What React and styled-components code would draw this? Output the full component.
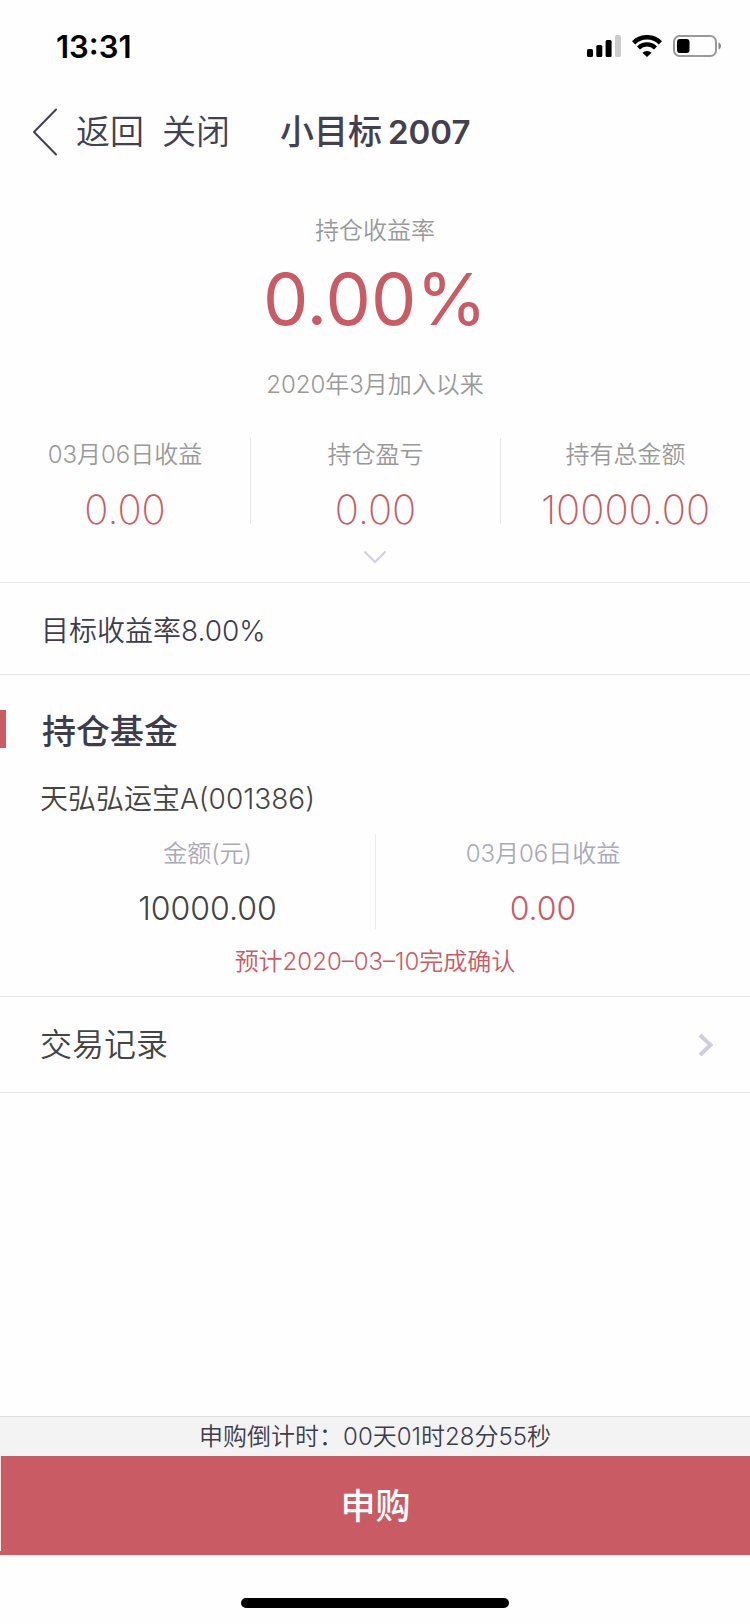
import React from "react"
import styled, { createGlobalStyle } from 'styled-components'

const GlobalStyle = createGlobalStyle`
  * {
    box-sizing: border-box;
  }

  body {
    margin: 0;
    background-color: #fefefe;
    color: #3e3c4c;
    font-family: Inter, "Noto Sans CJK SC", sans-serif;
    font-weight: 350;
  }

  button {
    padding: 0;
    border: none;
    background: none;
    color: inherit;
    font: inherit;
    cursor: pointer;
  }

  h1, h2, p, dl, dd {
    margin: 0;
  }

  svg {
    display: block;
  }
`

const Tela = styled.div`
  display: flex;
  flex-direction: column;
  min-height: 100vh;
`

const BarraDeStatus = styled.div`
  display: flex;
  align-items: center;
  justify-content: space-between;
  height: 92px;
  padding: 0 28px 0 56px;
  color: #000;
`

const Hora = styled.time`
  font-size: 31px;
  font-weight: 600;
`

const Indicadores = styled.div`
  display: flex;
  align-items: center;
  gap: 11px;
`

const Navegacao = styled.header`
  display: flex;
  align-items: center;
  height: 80px;
  padding: 0 32px;
  color: #43414f;
  font-size: 34px;
  line-height: 42px;
`

const BotaoNav = styled.button`
  display: flex;
  align-items: center;
  gap: 18px;
  margin-right: 18px;
`

const Titulo = styled.h1`
  display: flex;
  align-items: baseline;
  gap: 6px;
  margin-left: 32px;
  font-size: 34px;
  font-weight: 500;
  white-space: nowrap;
`

const Numero = styled.span`
  font-size: 33px;
  font-weight: 600;
`

const Resumo = styled.section`
  display: flex;
  flex-direction: column;
  align-items: center;
  padding: 41px 0 8px;
  border-bottom: 1px solid #e6e6e8;
`

const Legenda = styled.p`
  color: #999;
  font-size: 24px;
  line-height: 36px;
`

const Taxa = styled.p`
  margin: 10px 0 28px;
  color: #c95b64;
  font-size: 72px;
  font-weight: 400;
  line-height: 80px;
`

const Estatisticas = styled.dl`
  display: grid;
  grid-template-columns: repeat(3, 1fr);
  width: 100%;
  margin-top: 35px;
`

const Estatistica = styled.div`
  display: flex;
  flex-direction: column;
  align-items: center;
  gap: 24px;

  & + & {
    border-left: 1px solid #e6e6e8;
  }
`

const Rotulo = styled.dt`
  color: #999;
  font-size: 24px;
  line-height: 34px;
`

const Valor = styled.dd`
  color: #c95b64;
  font-size: 40px;
  font-weight: 250;
  line-height: 28px;
`

const BotaoExpandir = styled.button`
  display: grid;
  place-items: center;
  width: 80px;
  height: 34px;
  margin-top: 16px;
`

const Meta = styled.p`
  padding: 6px 41px 0;
  border-bottom: 1px solid #e6e6e8;
  font-size: 28px;
  line-height: 85px;
`

const Carteira = styled.section`
  padding: 35px 0 16px;
  border-bottom: 1px solid #e6e6e8;
`

const TituloSecao = styled.h2`
  padding: 6px 0 0 36px;
  border-left: 6px solid #c95b64;
  font-size: 34px;
  font-weight: 500;
  line-height: 32px;
`

const NomeDoFundo = styled.p`
  margin: 31px 0 15px;
  padding: 0 40px;
  color: #444;
  font-size: 28px;
  line-height: 40px;
`

const Detalhes = styled.dl`
  display: grid;
  grid-template-columns: 1fr 1fr;
  padding: 0 40px;
`

const Detalhe = styled.div`
  display: flex;
  flex-direction: column;
  align-items: center;
  gap: 15px;

  & + & {
    border-left: 1px solid #ececee;
  }

  dt {
    color: #a9a9b8;
    font-size: 24px;
    line-height: 40px;
  }

  dd {
    color: ${props => props.$destaque ? '#c95b64' : '#444'};
    font-size: 32px;
    line-height: 40px;
  }
`

const Aviso = styled.p`
  margin-top: 15px;
  color: #c95b64;
  font-size: 24px;
  line-height: 36px;
  text-align: center;
`

const LinkRegistros = styled.a`
  display: flex;
  align-items: center;
  justify-content: space-between;
  height: 96px;
  padding: 0 36px 0 40px;
  border-bottom: 1px solid #e6e6e8;
  color: #444;
  font-size: 32px;
  line-height: 42px;
  text-decoration: none;
`

const Rodape = styled.footer`
  margin-top: auto;
`

const Contagem = styled.p`
  border-top: 1px solid #dedee0;
  background-color: #f3f3f4;
  font-size: 24px;
  line-height: 39px;
  text-align: center;
`

const AreaDeCompra = styled.div`
  padding-bottom: 4px;
  background-color: #c95b64;
`

const BotaoComprar = styled.button`
  && {
    display: block;
    width: 100%;
    height: 95px;
    border-left: 1px solid #f6e4e5;
    color: #fff;
    font-size: 35px;
    font-weight: 500;
  }
`

const AreaInicio = styled.div`
  display: flex;
  justify-content: center;
  align-items: flex-end;
  height: 69px;
  padding-bottom: 16px;
`

const IndicadorInicio = styled.div`
  width: 268px;
  height: 10px;
  border-radius: 5px;
  background-color: #000;
`

const estatisticas = [
  { rotulo: '03月06日收益', valor: '0.00' },
  { rotulo: '持仓盈亏', valor: '0.00' },
  { rotulo: '持有总金额', valor: '10000.00' },
]

const Sinal = () => (
  <svg width="34" height="22" viewBox="0 0 34 22" aria-hidden="true">
    <rect x="0" y="14" width="6" height="8" rx="1.5" />
    <rect x="9.3" y="10" width="6" height="12" rx="1.5" />
    <rect x="18.6" y="5" width="6" height="17" rx="1.5" />
    <rect x="28" y="0" width="6" height="22" rx="1.5" fill="#ccc" />
  </svg>
)

const Wifi = () => (
  <svg width="30" height="22" viewBox="0 0 30 22" fill="none" stroke="#000" aria-hidden="true">
    <path d="M1.6 7.8a19 19 0 0 1 26.8 0" strokeWidth="4.6" />
    <path d="M6.5 13a12 12 0 0 1 17 0" strokeWidth="4.2" />
    <path d="M15 22l-4.6-4.2a6.6 6.6 0 0 1 9.2 0z" fill="#000" stroke="none" />
  </svg>
)

const Bateria = () => (
  <svg width="49" height="22" viewBox="0 0 49 22" aria-hidden="true">
    <rect x="1" y="1" width="42" height="20" rx="5.5" fill="none" stroke="#999" strokeWidth="2" />
    <rect x="4" y="4" width="12.5" height="14" rx="3" />
    <path d="M45.5 7.5c3.4 1.2 3.4 5.8 0 7z" fill="#888" />
  </svg>
)

export default class App extends React.Component {

  render() {
    return <Tela>
      <GlobalStyle />
      <BarraDeStatus>
        <Hora>13:31</Hora>
        <Indicadores>
          <Sinal />
          <Wifi />
          <Bateria />
        </Indicadores>
      </BarraDeStatus>
      <Navegacao>
        <BotaoNav>
          <svg width="26" height="48" viewBox="0 0 26 48" fill="none" stroke="#43414f" strokeWidth="2" strokeLinecap="round" strokeLinejoin="round" aria-hidden="true">
            <path d="M24 1.5L2 24l22 22.5" />
          </svg>
          返回
        </BotaoNav>
        <BotaoNav>关闭</BotaoNav>
        <Titulo>小目标<Numero>2007</Numero></Titulo>
      </Navegacao>
      <main>
        <Resumo>
          <Legenda>持仓收益率</Legenda>
          <Taxa>0.00%</Taxa>
          <Legenda>2020年3月加入以来</Legenda>
          <Estatisticas>
            {estatisticas.map((item) => {
              return <Estatistica key={item.rotulo}>
                <Rotulo>{item.rotulo}</Rotulo>
                <Valor>{item.valor}</Valor>
              </Estatistica>
            })}
          </Estatisticas>
          <BotaoExpandir aria-label="展开">
            <svg width="24" height="14" viewBox="0 0 24 14" fill="none" stroke="#cfcfe0" strokeWidth="2" aria-hidden="true">
              <path d="M1.5 1.5L12 12 22.5 1.5" />
            </svg>
          </BotaoExpandir>
        </Resumo>
        <Meta>目标收益率8.00%</Meta>
        <Carteira>
          <TituloSecao>持仓基金</TituloSecao>
          <NomeDoFundo>天弘弘运宝A(001386)</NomeDoFundo>
          <Detalhes>
            <Detalhe>
              <dt>金额(元)</dt>
              <dd>10000.00</dd>
            </Detalhe>
            <Detalhe $destaque>
              <dt>03月06日收益</dt>
              <dd>0.00</dd>
            </Detalhe>
          </Detalhes>
          <Aviso>预计2020–03–10完成确认</Aviso>
        </Carteira>
        <LinkRegistros href="#">
          交易记录
          <svg width="16" height="24" viewBox="0 0 16 24" fill="none" stroke="#cfcde0" strokeWidth="4" aria-hidden="true">
            <path d="M2 2l10.5 10L2 22" />
          </svg>
        </LinkRegistros>
      </main>
      <Rodape>
        <Contagem>申购倒计时：00天01时28分55秒</Contagem>
        <AreaDeCompra>
          <BotaoComprar>申购</BotaoComprar>
        </AreaDeCompra>
        <AreaInicio>
          <IndicadorInicio />
        </AreaInicio>
      </Rodape>
    </Tela>
  }
}
